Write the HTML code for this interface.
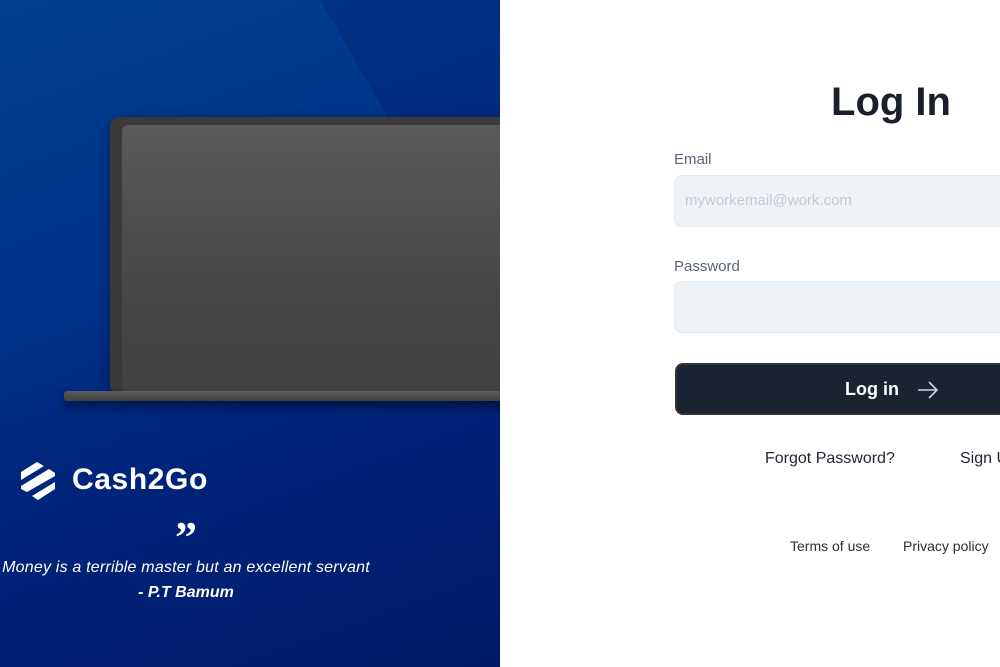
<!DOCTYPE html>
<html><head><style>
*{margin:0;padding:0;box-sizing:border-box}
body{width:1000px;height:667px;overflow:hidden;position:relative;background:#fff;font-family:"Liberation Sans",sans-serif}
.left{position:absolute;left:0;top:0;width:500px;height:667px;overflow:hidden;background:linear-gradient(160deg,#004090 0%,#00338c 35%,#00257c 60%,#001a66 100%)}
.sh1{position:absolute;left:528px;top:-40px;width:400px;height:800px;background:rgba(0,10,80,.2);transform:skewX(30deg)}
.lid{position:absolute;left:110px;top:117px;width:420px;height:277px;background:#3a3a3a;border-radius:10px;box-shadow:0 4px 14px rgba(0,0,0,.4)}
.scr{position:absolute;left:12px;top:8px;right:0;bottom:2px;background:linear-gradient(#5a5a5a,#444 70%,#424242);border-radius:6px}
.base{position:absolute;left:64px;top:391px;width:460px;height:10px;background:linear-gradient(#5c5c5c,#3e3e3e);border-radius:3px;box-shadow:0 6px 10px rgba(0,0,0,.45)}
.logo{position:absolute;left:18px;top:460px}
.brand{position:absolute;left:72px;top:463px;color:#fff;font-size:30px;font-weight:bold;letter-spacing:.6px}
.q{position:absolute;left:0;width:372px;text-align:center;color:#fff;white-space:nowrap}
.lbl{position:absolute;left:674px;font-size:15px;color:#5b6474}
.inp{position:absolute;left:674px;width:360px;height:52px;background:#edf3f6;border:1px solid #e3eaee;border-radius:8px}
</style></head><body>
<div class="left">
<div class="sh1"></div>
<div class="lid"><div class="scr"></div></div>
<div class="base"></div>
<svg class="logo" width="40" height="42" viewBox="0 0 40 42"><g fill="#fff">
<path d="M3 12 L19 2 L26 6 L3 20 Z"/><path d="M3 26 L31 9 L37 13 L37 16 L9 32 L3 29 Z"/><path d="M14 36 L37 22 L37 29 L20 40 Z"/></g></svg>
<div class="brand">Cash2Go</div>
<div class="q" style="top:516px;font-size:44px;font-weight:bold;font-family:'Liberation Serif',serif;line-height:44px">&#8221;</div>
<div class="q" style="top:559px;font-size:16px;font-style:italic;letter-spacing:.2px">Money is a terrible master but an excellent servant</div>
<div class="q" style="top:584px;font-size:16px;font-style:italic;font-weight:bold">- P.T Bamum</div>
</div>
<div style="position:absolute;left:791px;width:200px;text-align:center;top:80px;font-size:40px;font-weight:bold;color:#1a1f2b">Log In</div>
<div class="lbl" style="top:151px">Email</div>
<div class="inp" style="top:175px"><span style="position:absolute;left:10px;top:16px;font-size:15px;color:#c3c9cf">myworkemail@work.com</span></div>
<div class="lbl" style="top:258px">Password</div>
<div class="inp" style="top:281px"></div>
<div style="position:absolute;left:675px;top:363px;width:360px;height:52px;background:#1a2332;border-radius:8px;border:2px solid #333">
<span style="position:absolute;left:168px;top:14px;color:#fff;font-size:18px;font-weight:bold">Log in</span>
<svg style="position:absolute;left:240px;top:15px" width="22" height="20" viewBox="0 0 22 20"><path d="M1 10H20M12 2L20 10L12 18" stroke="#cfd3da" stroke-width="1.6" fill="none"/></svg>
</div>
<div style="position:absolute;left:765px;top:450px;font-size:16px;color:#1f2530;white-space:nowrap">Forgot Password?</div>
<div style="position:absolute;left:960px;top:450px;font-size:16px;color:#1f2530;white-space:nowrap">Sign Up</div>
<div style="position:absolute;left:790px;top:538px;font-size:14px;color:#2a303a;white-space:nowrap">Terms of use</div>
<div style="position:absolute;left:903px;top:538px;font-size:14px;color:#2a303a;white-space:nowrap">Privacy policy</div>
</body></html>
